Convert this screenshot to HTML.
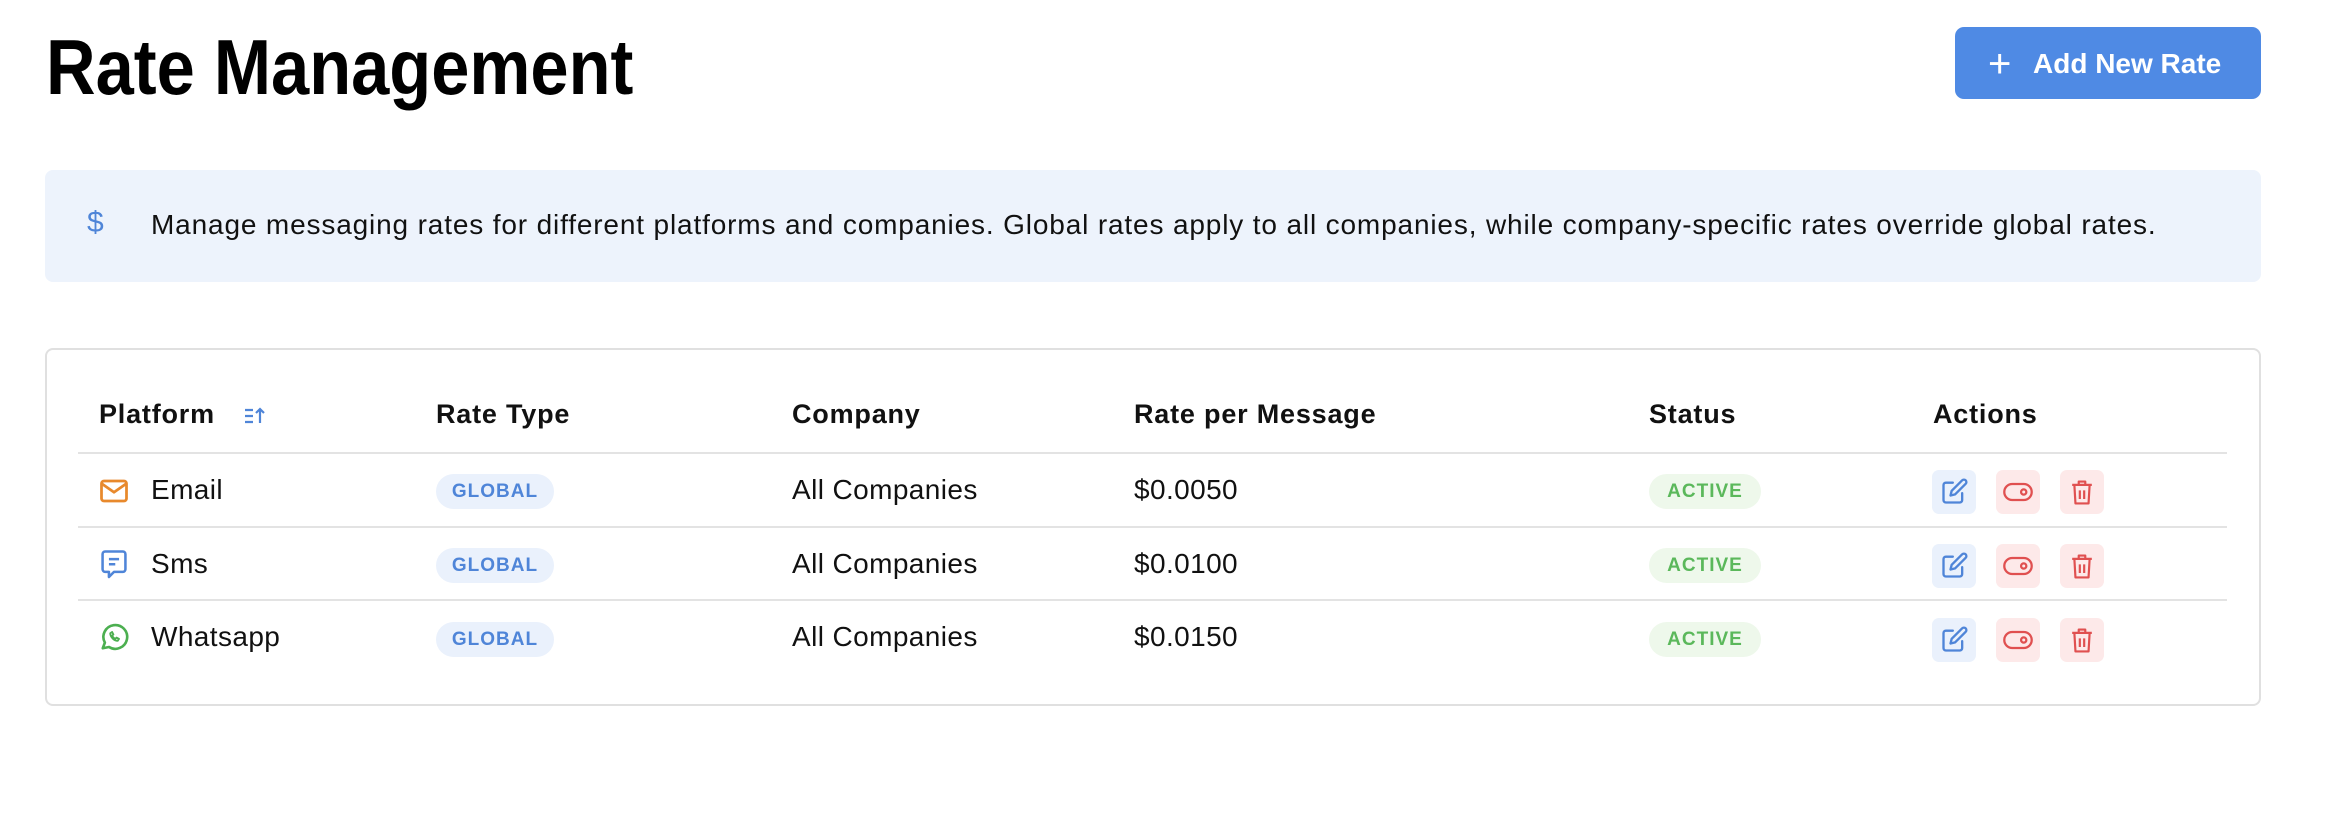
<!DOCTYPE html>
<html><head><meta charset="utf-8"><style>
*{margin:0;padding:0;box-sizing:border-box}
body{width:2342px;height:840px;background:#fff;font-family:"Liberation Sans",sans-serif;color:#111;position:relative;overflow:hidden}
.a{position:absolute}
h1{position:absolute;left:46px;top:22px;font-size:78px;font-weight:bold;transform:scaleX(0.88);transform-origin:left top;line-height:90px;color:#000}
.btn{left:1955px;top:27px;width:306px;height:72px;background:#4f8ae4;border-radius:9px;color:#fff;font-weight:bold;font-size:28px}
.info{left:45px;top:170px;width:2216px;height:112px;background:#edf3fc;border-radius:8px}
.card{left:45px;top:348px;width:2216px;height:358px;border:2px solid #e0e0e0;border-radius:8px}
.hd{font-weight:bold;font-size:27px;letter-spacing:0.8px;top:399px;color:#111}
.line{left:78px;width:2149px;height:2px;background:#e3e3e3}
.cell{font-size:28px;letter-spacing:0.4px;color:#111}
.pill{height:35px;border-radius:18px;font-size:19px;font-weight:bold;letter-spacing:1px;display:flex;align-items:center;justify-content:center}
.g{left:436px;width:118px;background:#eaf1fc;color:#4f85d8}
.s{left:1649px;width:112px;background:#eef8eb;color:#5bb85b}
.ab{width:44px;height:44px;border-radius:7px;display:flex;align-items:center;justify-content:center}
</style></head><body>
<h1>Rate Management</h1>
<div class="a btn"><span class="a" style="left:33px;top:17px;font-weight:normal;font-size:40px;line-height:40px">+</span><span class="a" style="left:78px;top:21px">Add New Rate</span></div>
<div class="a info"><span class="a" style="left:42px;top:36px;color:#4f85d8;font-size:30px">$</span><span class="a" style="left:106px;top:39px;font-size:28px;letter-spacing:0.85px;color:#111;white-space:nowrap">Manage messaging rates for different platforms and companies. Global rates apply to all companies, while company-specific rates override global rates.</span></div>
<div class="a card"></div>
<div class="a hd" style="left:99px">Platform</div>
<svg class="a" style="left:243px;top:406px" width="24" height="20" viewBox="0 0 24 20" fill="none" stroke="#4f85d8" stroke-width="2.2"><path d="M2 4h8M2 10h8M2 16h8M17 17V3M13 7l4-4 4 4"/></svg>
<div class="a hd" style="left:436px">Rate Type</div>
<div class="a hd" style="left:792px">Company</div>
<div class="a hd" style="left:1134px">Rate per Message</div>
<div class="a hd" style="left:1649px">Status</div>
<div class="a hd" style="left:1933px">Actions</div>
<div class="a line" style="top:452px"></div>
<div class="a line" style="top:526px"></div>
<div class="a line" style="top:599px"></div>

<svg class="a" style="left:99px;top:476px" width="30" height="30" viewBox="0 0 24 24" fill="none" stroke="#e8892c" stroke-width="2.2" stroke-linejoin="round"><rect x="2" y="4" width="20" height="16" rx="2"/><path d="M2 6l10 7 10-7"/></svg>
<div class="a cell" style="left:151px;top:474px">Email</div>
<div class="a pill g" style="top:474px">GLOBAL</div>
<div class="a cell" style="left:792px;top:474px">All Companies</div>
<div class="a cell" style="left:1134px;top:474px">$0.0050</div>
<div class="a pill s" style="top:474px">ACTIVE</div>

<svg class="a" style="left:100px;top:549px" width="28" height="33" viewBox="0 0 22 26" fill="none" stroke="#4f85d8" stroke-width="2" stroke-linejoin="round"><path d="M4 2h14a2 2 0 0 1 2 2v12a2 2 0 0 1-2 2H11l-4 4v-4H4a2 2 0 0 1-2-2V4a2 2 0 0 1 2-2z"/><path d="M7 8h8M7 12h5"/></svg>
<div class="a cell" style="left:151px;top:548px">Sms</div>
<div class="a pill g" style="top:548px">GLOBAL</div>
<div class="a cell" style="left:792px;top:548px">All Companies</div>
<div class="a cell" style="left:1134px;top:548px">$0.0100</div>
<div class="a pill s" style="top:548px">ACTIVE</div>

<svg class="a" style="left:99px;top:622px" width="30" height="30" viewBox="0 0 24 24" fill="none" stroke="#4caf50" stroke-width="2.1" stroke-linejoin="round"><path d="M3 21l1.7-4.5A9.5 9.5 0 1 1 8 20z"/><path d="M9 9c0 3 3 6 6 6l1-1.5-2-1-1 1c-1-.5-2-1.5-2.5-2.5l1-1-1-2z" stroke-width="1.5"/></svg>
<div class="a cell" style="left:151px;top:621px">Whatsapp</div>
<div class="a pill g" style="top:622px">GLOBAL</div>
<div class="a cell" style="left:792px;top:621px">All Companies</div>
<div class="a cell" style="left:1134px;top:621px">$0.0150</div>
<div class="a pill s" style="top:622px">ACTIVE</div>

<div class="a ab" style="left:1932px;top:470px;background:#eaf1fc"><svg width="28" height="28" viewBox="0 0 24 24" fill="none" stroke="#4f85d8" stroke-width="2" stroke-linecap="round" stroke-linejoin="round"><path d="M11 4H5a2 2 0 0 0-2 2v13a2 2 0 0 0 2 2h12a2 2 0 0 0 2-2v-6"/><path d="M9 15l1-4 9-9a2 2 0 0 1 3 3l-9 9z"/></svg></div>
<div class="a ab" style="left:1996px;top:470px;background:#fde9e9"><svg width="32" height="28" viewBox="0 0 28 24" fill="none" stroke="#e05050" stroke-width="2"><rect x="2" y="5" width="24" height="14" rx="7"/><circle cx="19" cy="12" r="2.3"/></svg></div>
<div class="a ab" style="left:2060px;top:470px;background:#fde9e9"><svg width="24" height="29" viewBox="0 0 22 26" fill="none" stroke="#e05050" stroke-width="2" stroke-linejoin="round"><path d="M2 6h18M8 6V3h6v3M4 6l1 17h12l1-17M9 11v8M13 11v8"/></svg></div>

<div class="a ab" style="left:1932px;top:544px;background:#eaf1fc"><svg width="28" height="28" viewBox="0 0 24 24" fill="none" stroke="#4f85d8" stroke-width="2" stroke-linecap="round" stroke-linejoin="round"><path d="M11 4H5a2 2 0 0 0-2 2v13a2 2 0 0 0 2 2h12a2 2 0 0 0 2-2v-6"/><path d="M9 15l1-4 9-9a2 2 0 0 1 3 3l-9 9z"/></svg></div>
<div class="a ab" style="left:1996px;top:544px;background:#fde9e9"><svg width="32" height="28" viewBox="0 0 28 24" fill="none" stroke="#e05050" stroke-width="2"><rect x="2" y="5" width="24" height="14" rx="7"/><circle cx="19" cy="12" r="2.3"/></svg></div>
<div class="a ab" style="left:2060px;top:544px;background:#fde9e9"><svg width="24" height="29" viewBox="0 0 22 26" fill="none" stroke="#e05050" stroke-width="2" stroke-linejoin="round"><path d="M2 6h18M8 6V3h6v3M4 6l1 17h12l1-17M9 11v8M13 11v8"/></svg></div>

<div class="a ab" style="left:1932px;top:618px;background:#eaf1fc"><svg width="28" height="28" viewBox="0 0 24 24" fill="none" stroke="#4f85d8" stroke-width="2" stroke-linecap="round" stroke-linejoin="round"><path d="M11 4H5a2 2 0 0 0-2 2v13a2 2 0 0 0 2 2h12a2 2 0 0 0 2-2v-6"/><path d="M9 15l1-4 9-9a2 2 0 0 1 3 3l-9 9z"/></svg></div>
<div class="a ab" style="left:1996px;top:618px;background:#fde9e9"><svg width="32" height="28" viewBox="0 0 28 24" fill="none" stroke="#e05050" stroke-width="2"><rect x="2" y="5" width="24" height="14" rx="7"/><circle cx="19" cy="12" r="2.3"/></svg></div>
<div class="a ab" style="left:2060px;top:618px;background:#fde9e9"><svg width="24" height="29" viewBox="0 0 22 26" fill="none" stroke="#e05050" stroke-width="2" stroke-linejoin="round"><path d="M2 6h18M8 6V3h6v3M4 6l1 17h12l1-17M9 11v8M13 11v8"/></svg></div>
</body></html>
